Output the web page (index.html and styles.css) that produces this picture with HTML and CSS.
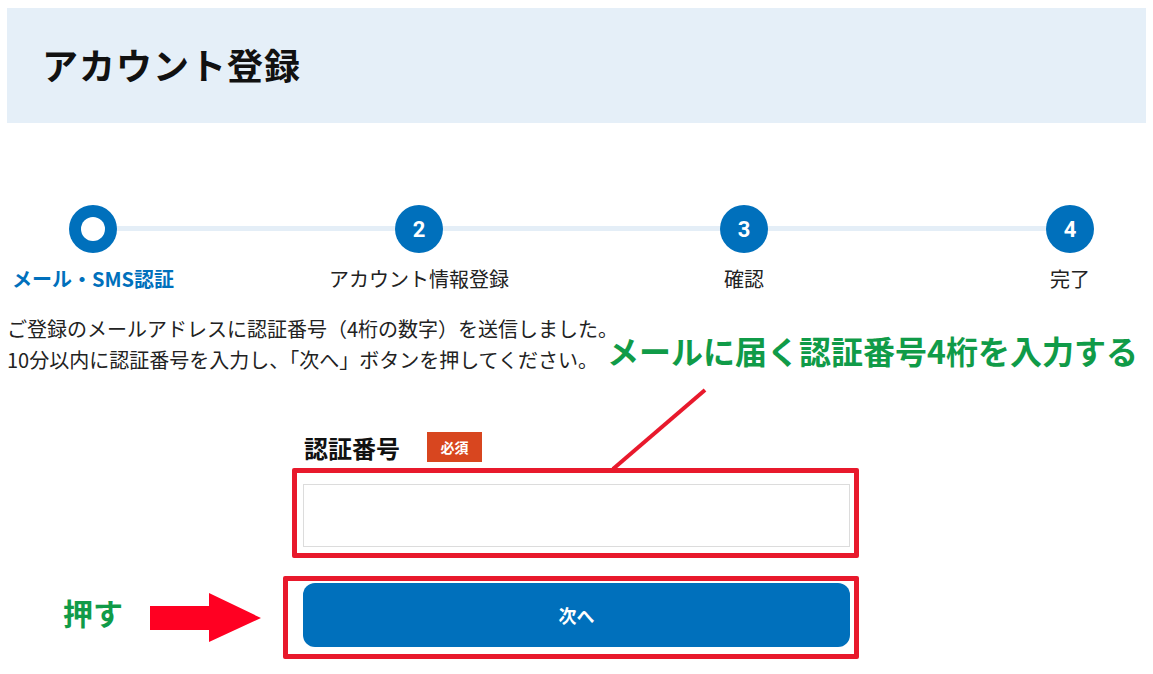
FILE: index.html
```html
<!DOCTYPE html>
<html lang="ja">
<head>
<meta charset="utf-8">
<title>アカウント登録</title>
<link rel="stylesheet" href="styles.css">
</head>
<body>
<div class="page">
  <header class="page-header">
    <h1 class="page-title">アカウント登録</h1>
  </header>

  <ol class="steps">
    <li class="step step-1 is-current">
      <span class="step-circle"><span class="step-dot"></span></span>
      <span class="step-label">メール・SMS認証</span>
    </li>
    <li class="step step-2">
      <span class="step-circle">2</span>
      <span class="step-label">アカウント情報登録</span>
    </li>
    <li class="step step-3">
      <span class="step-circle">3</span>
      <span class="step-label">確認</span>
    </li>
    <li class="step step-4">
      <span class="step-circle">4</span>
      <span class="step-label">完了</span>
    </li>
  </ol>

  <p class="lead">ご登録のメールアドレスに認証番号（4桁の数字）を送信しました。<br>10分以内に認証番号を入力し、「次へ」ボタンを押してください。</p>

  <form class="form" onsubmit="return false;">
    <div class="field-head">
      <label class="field-label" for="code">認証番号</label>
      <span class="badge">必須</span>
    </div>
    <input class="field-input" id="code" type="text">
    <button class="btn-next" type="submit">次へ</button>
  </form>

  <div class="annot annot-box1"></div>
  <div class="annot annot-box2"></div>
  <div class="annot annot-note">メールに届く認証番号4桁を入力する</div>
  <div class="annot annot-push">押す</div>
  <svg class="annot annot-svg" width="1153" height="674" viewBox="0 0 1153 674">
    <line x1="705" y1="390" x2="613" y2="469" stroke="#e8192c" stroke-width="4"/>
    <polygon points="150,606 209,606 209,593 261,618 209,642 209,630 150,630" fill="#ff0022"/>
  </svg>
</div>
</body>
</html>
```

FILE: styles.css
```css
* { box-sizing: border-box; }
html, body { margin: 0; padding: 0; background: #fff; }
body {
  font-family: "Noto Sans CJK JP", "Noto Sans", sans-serif;
  color: #222;
  width: 1153px;
  height: 674px;
  overflow: hidden;
}
.page {
  position: relative;
  padding: 8px 7px 0;
  height: 674px;
}
.page-header {
  height: 115px;
  background: #e5eff8;
  display: flex;
  align-items: center;
  padding-left: 35px;
}
.page-title {
  margin: 0;
  font-size: 36px;
  font-weight: 700;
  color: #111;
  letter-spacing: 1px;
  line-height: 1;
  padding-bottom: 4px;
}

.steps {
  list-style: none;
  margin: 82px 0 0;
  padding: 0;
  display: flex;
  justify-content: space-between;
  position: relative;
}
.steps::before {
  content: "";
  position: absolute;
  left: 90px;
  right: 80px;
  top: 21px;
  height: 5px;
  background: #e4eef7;
}
.step {
  display: flex;
  flex-direction: column;
  align-items: center;
  position: relative;
}
.step-1 { width: 172px; }
.step-2 { width: 150px; }
.step-3 { width: 170px; }
.step-4 { width: 152px; }
.step-circle {
  width: 48px;
  height: 48px;
  border-radius: 50%;
  background: #0070bc;
  color: #fff;
  font-family: "Roboto", "Noto Sans", sans-serif;
  font-weight: 700;
  font-size: 22px;
  display: flex;
  align-items: center;
  justify-content: center;
}
.step-dot {
  width: 24px;
  height: 24px;
  border-radius: 50%;
  background: #fff;
}
.step-label {
  margin-top: 12px;
  font-size: 20px;
  line-height: 28px;
  white-space: nowrap;
  color: #222;
}
.is-current .step-label {
  color: #0070bc;
  font-weight: 700;
}

.lead {
  margin: 20px 0 0;
  font-size: 20px;
  line-height: 31px;
  color: #222;
}

.form {
  width: 547px;
  margin: 57px auto 0;
}
.field-head {
  display: flex;
  align-items: center;
  height: 30px;
  padding-left: 1px;
}
.field-label {
  font-size: 24px;
  font-weight: 700;
  color: #111;
  margin-right: 27px;
}
.badge {
  width: 55px;
  height: 30px;
  background: #d8461f;
  color: #fff;
  font-size: 14px;
  font-weight: 700;
  display: flex;
  align-items: center;
  justify-content: center;
}
.field-input {
  display: block;
  width: 100%;
  height: 63px;
  margin-top: 22px;
  border: 1px solid #dcdcdc;
  background: #fff;
  font-size: 18px;
  padding: 0 12px;
  outline: none;
}
.btn-next {
  display: block;
  width: 100%;
  height: 64px;
  margin-top: 36px;
  border: 0;
  border-radius: 12px;
  background: #0070bc;
  color: #fff;
  font-family: "Noto Sans CJK JP", sans-serif;
  font-size: 18px;
  font-weight: 700;
}

.annot { position: absolute; pointer-events: none; }
.annot-svg { left: 0; top: 0; }
.annot-box1 {
  left: 292px; top: 468px;
  width: 567px; height: 90px;
  border: 5px solid #e8192c;
  border-radius: 2px;
}
.annot-box2 {
  left: 283px; top: 576px;
  width: 576px; height: 83px;
  border: 5px solid #e8192c;
  border-radius: 2px;
}
.annot-note {
  left: 607px; top: 332px;
  font-size: 32px;
  line-height: 36px;
  font-weight: 700;
  color: #109b48;
  white-space: nowrap;
}
.annot-push {
  left: 63px; top: 594px;
  font-size: 30px;
  line-height: 36px;
  font-weight: 700;
  color: #109b48;
}
```
